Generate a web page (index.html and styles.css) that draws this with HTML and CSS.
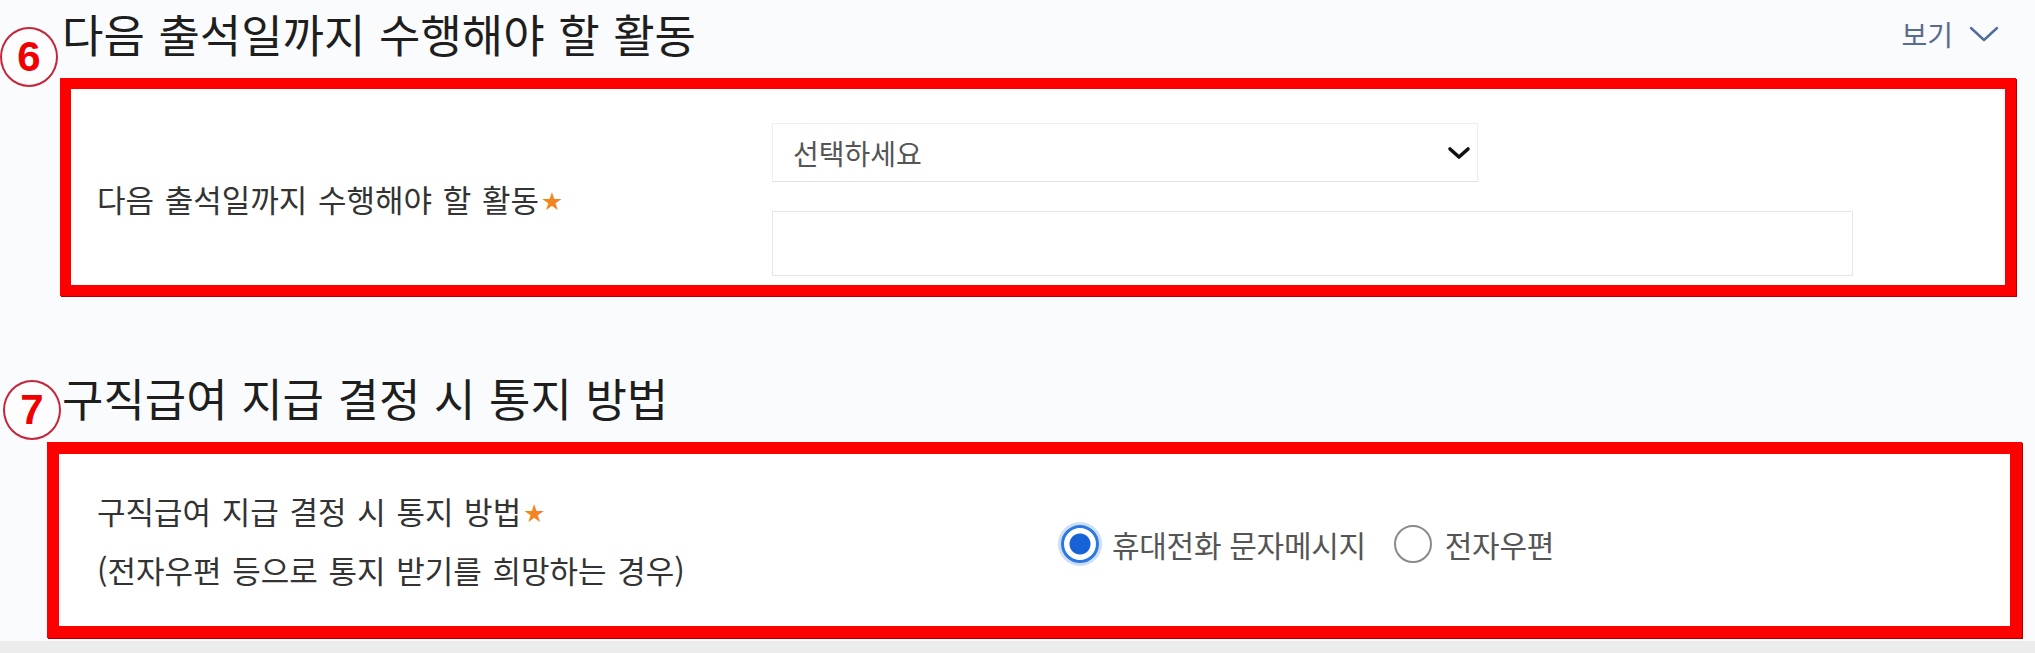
FILE: index.html
```html
<!DOCTYPE html>
<html lang="ko">
<head>
<meta charset="utf-8">
<title>구직급여</title>
<link rel="stylesheet" href="styles.css">
</head>
<body>
<div class="page">
  <section class="section section-activity">
    <div class="section-head">
      <h2 class="section-title">다음 출석일까지 수행해야 할 활동</h2>
      <a class="toggle" href="#">보기
        <svg class="toggle-icon" viewBox="0 0 30 16" width="30" height="16"><path d="M2 2 L15 14 L28 2" fill="none" stroke="#4f6c9e" stroke-width="2.4" stroke-linecap="round" stroke-linejoin="round"/></svg>
      </a>
    </div>
    <span class="marker marker-6">6</span>
    <div class="frame frame-1">
      <div class="form-row row-activity">
        <div class="label">다음 출석일까지 수행해야 할 활동<span class="req">★</span></div>
        <div class="fields">
          <div class="select">
            <span class="select-text">선택하세요</span>
            <svg class="select-arrow" viewBox="0 0 24 14" width="24" height="14"><path d="M3 3 L12 11 L21 3" fill="none" stroke="#111" stroke-width="3.6" stroke-linecap="round" stroke-linejoin="round"/></svg>
          </div>
          <input class="text-input" type="text" aria-label="활동 내용">
        </div>
      </div>
    </div>
  </section>

  <section class="section section-notify">
    <div class="section-head">
      <h2 class="section-title">구직급여 지급 결정 시 통지 방법</h2>
    </div>
    <span class="marker marker-7">7</span>
    <div class="frame frame-2">
      <div class="form-row row-notify">
        <div class="label label-multi">
          <div>구직급여 지급 결정 시 통지 방법<span class="req">★</span></div>
          <div>(전자우편 등으로 통지 받기를 희망하는 경우)</div>
        </div>
        <div class="radios">
          <label class="radio">
            <span class="radio-dot checked"></span>
            <span class="radio-text">휴대전화 문자메시지</span>
          </label>
          <label class="radio">
            <span class="radio-dot"></span>
            <span class="radio-text">전자우편</span>
          </label>
        </div>
      </div>
    </div>
  </section>
</div>
</body>
</html>
```

FILE: styles.css
```css
* { box-sizing: border-box; }

html, body {
  margin: 0;
  padding: 0;
}

body {
  width: 2035px;
  height: 653px;
  overflow: hidden;
  background: #ececec;
  font-family: "Noto Sans CJK KR", "Noto Sans", sans-serif;
  color: #333;
}

.page {
  height: 641px;
  background: #f9fbfc;
}

.section {
  position: relative;
}

.section-head {
  display: flex;
  align-items: center;
  justify-content: space-between;
  padding-left: 62px;
  padding-right: 36px;
}

.section-activity .section-head {
  height: 68px;
}

.section-notify {
  padding-top: 80px;
}

.section-notify .section-head {
  height: 44px;
}

.section-title {
  margin: 0;
  font-size: 45px;
  line-height: 44px;
  font-weight: 400;
  color: #1e1e1e;
  word-spacing: 1px;
}

.toggle {
  display: flex;
  align-items: center;
  gap: 16px;
  font-size: 28px;
  line-height: 30px;
  color: #5a6b8d;
  text-decoration: none;
}

.toggle-icon {
  display: block;
}

.marker {
  position: absolute;
  width: 58px;
  height: 60px;
  border: 2px solid #c4263a;
  border-radius: 50%;
  display: flex;
  align-items: center;
  justify-content: center;
  font-family: "Liberation Sans", Arial, sans-serif;
  font-weight: 700;
  font-size: 42px;
  color: #f00000;
  background: rgba(255,255,255,0.6);
}

.marker-6 {
  left: 0;
  top: 27px;
}

.marker-7 {
  left: 3px;
  top: 84px;
}

.frame {
  border: 11px solid #ff0000;
  background: #fff;
  box-shadow: 1px 1px 0 #b00000;
}

.frame-1 {
  margin-top: 10px;
  margin-left: 60px;
  width: 1956px;
  height: 218px;
  padding: 34px 0 0 26px;
}

.frame-2 {
  margin-top: 22px;
  margin-left: 47px;
  width: 1975px;
  height: 196px;
  border-width: 12px;
  padding: 0 0 0 38px;
  display: flex;
  align-items: center;
}

.form-row {
  display: grid;
  align-items: center;
}

.row-activity {
  grid-template-columns: 675px 1fr;
}

.row-notify {
  width: 100%;
  grid-template-columns: 964px 1fr;
}

.label {
  font-size: 31px;
  line-height: 40px;
  word-spacing: 2px;
  color: #333;
}

.label-multi {
  line-height: 57px;
}

.req {
  color: #f08522;
  font-size: 20px;
  margin-left: 3px;
  vertical-align: 3px;
}

.fields {
  display: flex;
  flex-direction: column;
  gap: 29px;
  align-items: flex-start;
}

.select {
  width: 706px;
  height: 59px;
  display: flex;
  align-items: center;
  justify-content: space-between;
  padding: 0 6px 0 20px;
  background: #fff;
  border: 1px solid #eeeeee;
  border-bottom-color: #e2e2e2;
}

.select-text {
  font-size: 28px;
  color: #555;
}

.select-arrow {
  display: block;
}

.text-input {
  width: 1081px;
  height: 65px;
  border: 1px solid #e6e6e6;
  background: #fff;
  font: inherit;
  padding: 0 16px;
  outline: none;
}

.radios {
  display: flex;
  align-items: center;
  gap: 28px;
  margin-top: 8px;
}

.radio {
  display: flex;
  align-items: center;
  gap: 13px;
}

.radio-dot {
  width: 38px;
  height: 38px;
  border-radius: 50%;
  border: 2px solid #8a8a8a;
  background: #fff;
  flex: none;
}

.radio-dot.checked {
  border: 3px solid #2b78e0;
  background: radial-gradient(circle, #1662d6 0 10px, #fff 11px);
  box-shadow: 0 0 0 3px rgba(90, 150, 230, 0.3);
}

.radio-text {
  font-size: 30px;
  line-height: 38px;
  color: #555;
  letter-spacing: -0.3px;
}
```
